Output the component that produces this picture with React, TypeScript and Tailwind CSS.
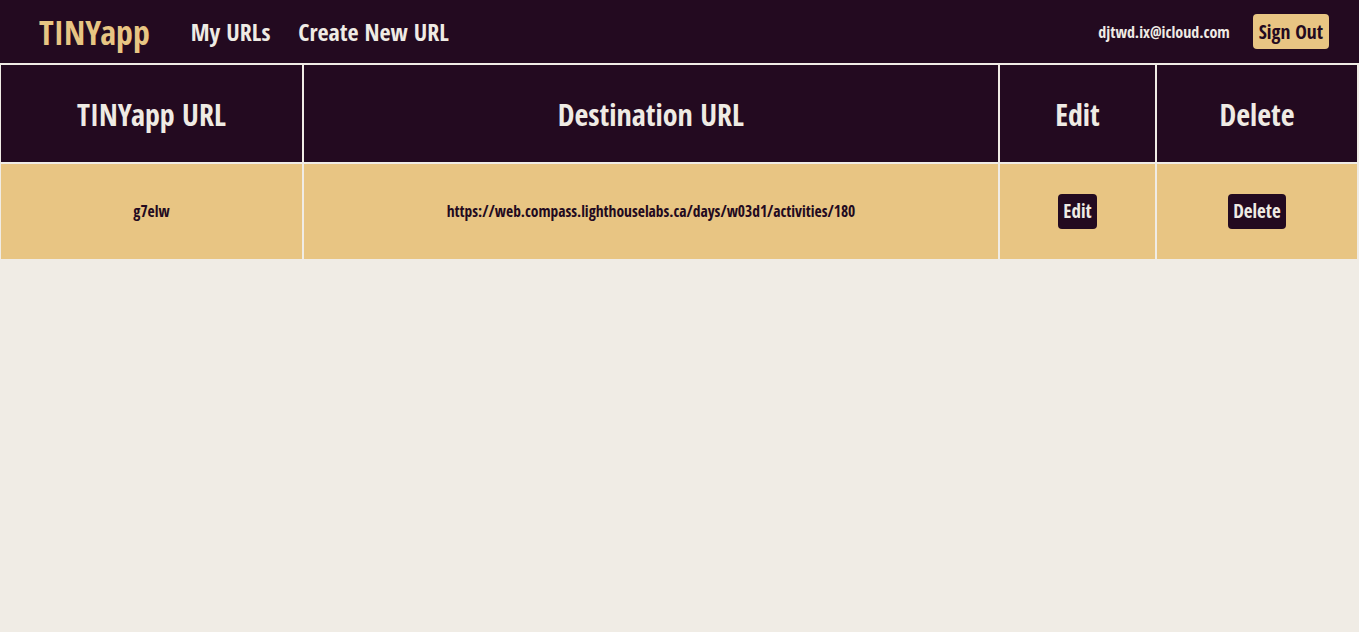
export default function App() {
  const font = "font-['Open_Sans_Condensed','Roboto_Condensed',sans-serif] font-bold";
  return (
    <div className={`min-h-[632px] bg-[#f0ece5] ${font}`}>
      <nav className="flex h-[63px] items-center bg-[#230a20] pl-[39px] pr-[30px]">
        <span className="text-[34px] leading-none text-[#e8c583]">TINYapp</span>
        <a className="ml-[41px] text-[24px] leading-none text-[#efebe4]">My URLs</a>
        <a className="ml-[28px] text-[24px] leading-none text-[#efebe4]">Create New URL</a>
        <span className="ml-auto text-[16px] text-[#efebe4]">djtwd.ix@icloud.com</span>
        <button className="ml-[23px] h-[35px] rounded-[4px] bg-[#e8c583] px-[6px] text-[19.5px] leading-none text-[#230a20]">
          Sign Out
        </button>
      </nav>
      <div className="grid grid-cols-[301px_694px_155px_1fr] gap-[2px] pl-[1px] pr-[2px] pt-[2px]">
        {["TINYapp URL", "Destination URL", "Edit", "Delete"].map((h) => (
          <div key={h} className="flex h-[97px] items-center justify-center bg-[#230a20] pt-[2px] text-[30px] text-[#efebe4]">
            {h}
          </div>
        ))}
        <div className="flex h-[95px] items-center justify-center bg-[#e8c583] text-[15.5px] text-[#230a20]">g7elw</div>
        <div className="flex h-[95px] items-center justify-center bg-[#e8c583] text-[15.5px] text-[#230a20]">
          https://web.compass.lighthouselabs.ca/days/w03d1/activities/180
        </div>
        <div className="flex h-[95px] items-center justify-center bg-[#e8c583]">
          <button className="h-[35px] rounded-[4px] bg-[#230a20] px-[5px] text-[19px] text-[#efebe4]">Edit</button>
        </div>
        <div className="flex h-[95px] items-center justify-center bg-[#e8c583]">
          <button className="h-[35px] rounded-[4px] bg-[#230a20] px-[5px] text-[19px] text-[#efebe4]">Delete</button>
        </div>
      </div>
    </div>
  );
}
